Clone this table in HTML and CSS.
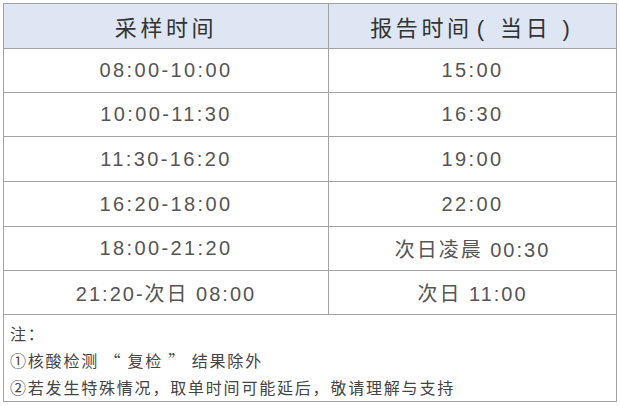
FILE: index.html
```html
<!DOCTYPE html>
<html lang="zh-CN">
<head>
<meta charset="utf-8">
<link rel="stylesheet" href="styles.css">
</head>
<body>
<table class="sched">
  <colgroup><col class="c1"><col class="c2"></colgroup>
  <thead>
    <tr class="head"><th>采样时间</th><th>报告时间<span class="paren open">( </span>当日<span class="paren"> )</span></th></tr>
  </thead>
  <tbody>
    <tr class="r"><td>08:00-10:00</td><td>15:00</td></tr>
    <tr class="r"><td>10:00-11:30</td><td>16:30</td></tr>
    <tr class="r r45"><td>11:30-16:20</td><td>19:00</td></tr>
    <tr class="r r45"><td>16:20-18:00</td><td>22:00</td></tr>
    <tr class="r"><td>18:00-21:20</td><td class="cjk">次日凌晨 00:30</td></tr>
    <tr class="r"><td class="cjk">21:20-次日 08:00</td><td class="cjk">次日 11:00</td></tr>
    <tr class="notes">
      <td colspan="2">
        <div class="line">注：</div>
        <div class="line">①核酸检测 “ 复检 ” 结果除外</div>
        <div class="line">②若发生特殊情况，取单时间可能延后，敬请理解与支持</div>
      </td>
    </tr>
  </tbody>
</table>
</body>
</html>
```

FILE: styles.css
```css
html, body {
  margin: 0;
  background: #ffffff;
}
body {
  padding: 3px 0 0 3px;
  font-family: "Liberation Sans", "Noto Sans CJK SC", sans-serif;
  color: #505050;
}
.sched {
  border-collapse: collapse;
  width: 613px;
  table-layout: fixed;
  border: 1.5px solid #a3a3a3;
}
.c1 { width: 325px; }
.c2 { width: 288px; }
.sched th, .sched td {
  border: 1.5px solid #a3a3a3;
  padding: 0;
  text-align: center;
  vertical-align: middle;
}
.head {
  height: 45px;
  background: #dde6f2;
}
.head th {
  font-family: "Noto Sans CJK SC", sans-serif;
  font-weight: normal;
  font-size: 22px;
  letter-spacing: 3.6px;
  color: #333333;
}
.head .paren {
  font-family: "Liberation Sans", sans-serif;
  letter-spacing: 5px;
}
.head .paren.open {
  margin-left: 4px;
}
.r { height: 44px; }
.r45 { height: 45px; }
.r td {
  font-size: 20px;
  letter-spacing: 2.4px;
  color: #555555;
}
.r td.cjk {
  letter-spacing: 2px;
}
.notes { height: 85px; }
.notes td {
  text-align: left;
  vertical-align: top;
  padding: 5px 6px 0 6px;
  font-family: "Noto Sans CJK SC", sans-serif;
  font-size: 16px;
  letter-spacing: 1.8px;
  color: #444444;
}
.line {
  line-height: 27px;
  height: 27px;
}
```
